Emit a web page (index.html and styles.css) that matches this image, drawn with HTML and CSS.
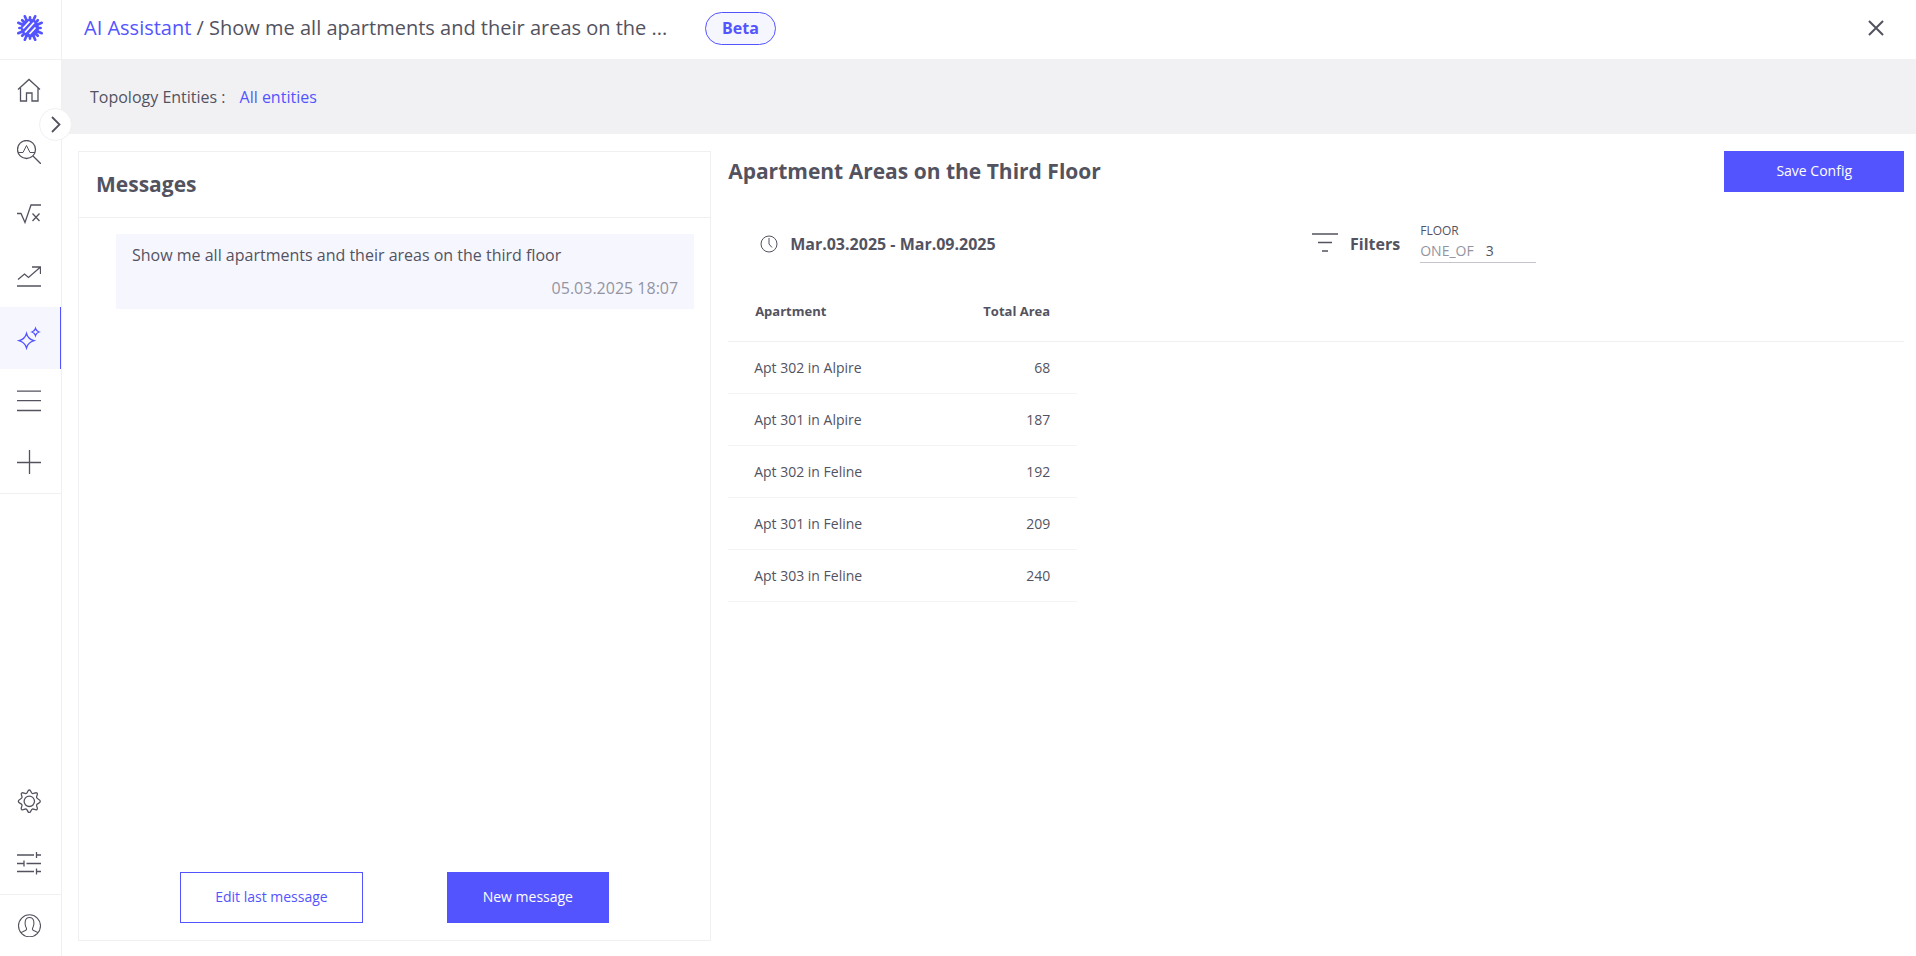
FILE: index.html
```html
<!DOCTYPE html>
<html lang="en">
<head>
<meta charset="utf-8">
<title>AI Assistant</title>
<link rel="stylesheet" href="styles.css">
</head>
<body>
<div class="app">
  <nav class="sidebar" aria-label="Main">
    <a class="logo" href="#" aria-label="Logo">
      <svg width="28" height="28" viewBox="0 0 28 28">
        <path d="M8.800 2.300L19.200 25.700M19.200 2.300L8.800 25.700M2.300 8.800L25.700 19.200M2.300 19.200L25.700 8.800M6.200 6.200L21.800 21.800M21.800 6.200L6.200 21.800M14 3.400V24.600M3.400 14H24.600" stroke="#5454ff" stroke-width="2.700" stroke-linecap="round"/>
        <circle cx="14" cy="14" r="9.200" fill="#5454ff"/>
        <path d="M7 14.500l6.500-7M9 18.500l9-10M13.500 20l6-6.500" stroke="#fff" stroke-width="1.800" fill="none"/>
      </svg>
    </a>
    <div class="nav-group">
      <a class="nav-item" href="#" aria-label="Home"><svg class="icon" viewBox="0 0 24 24"><path d="M1 11.500L12 1.500l11 10M3.500 10v13h6v-8h5.500v8h6V10"/></svg></a>
      <a class="nav-item" href="#" aria-label="Explore"><svg class="icon" viewBox="0 0 24 24"><circle cx="9.500" cy="9.500" r="9"/><path d="M16 16l8 8"/><path stroke-width="1" d="M1 12.500h5l3.500-7 3.500 7h5"/></svg></a>
      <a class="nav-item" href="#" aria-label="Formulas"><svg class="icon" viewBox="0 0 24 24"><path d="M0 11.500h4l4 9L14 3h10M15.500 11.500l7 7.500M22.500 11.500l-7 7.500"/></svg></a>
      <a class="nav-item" href="#" aria-label="Trends"><svg class="icon" viewBox="0 0 24 24"><path d="M1 15.500l6.500-5.500 4 3.500L23.500 3M15 3h8.500v7M0 22h24"/></svg></a>
      <a class="nav-item nav-item--active" href="#" aria-label="AI Assistant"><svg class="icon" viewBox="0 0 24 24"><path d="M9.500 7.500q1.500 5.500 7.500 7.200-6 1.800-7.500 7.300Q8 16.500 2 14.700 8 13 9.500 7.500zM18.500 2.500q.8 2.500 3.500 3.500-2.700 1-3.500 3.500Q17.700 7 15 6q2.700-1 3.500-3.500z"/></svg></a>
      <a class="nav-item" href="#" aria-label="Lists"><svg class="icon" viewBox="0 0 24 24"><path d="M0 3.200h24M0 12.700h24M0 22.500h24"/></svg></a>
      <a class="nav-item" href="#" aria-label="Add"><svg class="icon" viewBox="0 0 24 24"><path d="M12.500 0v24M0 12.500h24"/></svg></a>
    </div>
    <div class="nav-group nav-group--bottom">
      <a class="nav-item" href="#" aria-label="Settings"><svg class="icon" viewBox="0 0 24 24"><circle cx="12.300" cy="12.300" r="5.200"/><path d="M12.300 1c1.800 0 1.500 2.800 3 3.500s3.300-1.700 4.700-.4-1 3.200-.3 4.700 3.600 1.600 3.600 3.500-2.900 2-3.600 3.500 1.600 3.400.3 4.700-3.200-1-4.700-.4-1.200 3.500-3 3.500-1.500-2.800-3-3.500-3.300 1.700-4.700.4 1-3.200.3-4.700-3.600-1.600-3.600-3.500 2.900-2 3.600-3.500-1.600-3.400-.3-4.700 3.200 1 4.700.4 1.200-3.500 3-3.500z"/></svg></a>
      <a class="nav-item" href="#" aria-label="Controls"><svg class="icon" viewBox="0 0 24 24"><path d="M0 4h17M19.500 4H24M19.500 1v6M0 12.500h6.500M9.500 12.500H24M7 9.500v6M0 20.500h17M19.500 20.500H24M19.500 17.500v6"/></svg></a>
    </div>
    <div class="nav-group nav-group--user">
      <a class="nav-item" href="#" aria-label="Account"><svg class="icon icon--thin" viewBox="0 0 24 24"><circle cx="12.500" cy="12.800" r="11"/><path d="M4 20c1-1.500 5-2 5.500-3.500.3-1-.1-1.800-.8-3C8 12 8 9.500 8.300 8 8.800 5.500 10.500 4.500 12.500 4.500s3.700 1 4.200 3.500c.3 1.500.3 4-.4 5.500-.7 1.200-1.100 2-.8 3 .5 1.500 4.500 2 5.500 3.500"/></svg></a>
    </div>
    <button class="expand" type="button" aria-label="Expand menu"><svg width="10" height="18" viewBox="0 0 10 18"><path d="M1 1L8.500 8.500 1 16" fill="none" stroke="#53535f" stroke-width="1.800"/></svg></button>
  </nav>

  <div class="page">
    <header class="topbar">
      <h1 class="crumbs"><a class="link" href="#">AI Assistant</a> / Show me all apartments and their areas on the ...</h1>
      <span class="badge">Beta</span>
      <button class="close" type="button" aria-label="Close"><svg width="16" height="16" viewBox="0 0 16 16"><path d="M1 1l14 14M15 1L1 15" stroke="#53535f" stroke-width="2"/></svg></button>
    </header>
    <div class="scope"><span>Topology Entities :</span><a class="link" href="#">All entities</a></div>

    <main class="content">
      <section class="messages">
        <h2 class="messages-title">Messages</h2>
        <div class="messages-list">
          <article class="message">
            <p class="message-text">Show me all apartments and their areas on the third floor</p>
            <time class="message-time">05.03.2025 18:07</time>
          </article>
        </div>
        <div class="messages-actions">
          <button class="btn btn--outline" type="button">Edit last message</button>
          <button class="btn" type="button">New message</button>
        </div>
      </section>

      <section class="report">
        <div class="report-head">
          <h2 class="report-title">Apartment Areas on the Third Floor</h2>
          <button class="btn btn--save" type="button">Save Config</button>
        </div>
        <div class="report-tools">
          <div class="period">
            <svg width="18" height="18" viewBox="0 0 18 18" fill="none" stroke="#53535f"><circle cx="9" cy="9" r="8"/><path d="M9 3v6l3 3.500"/></svg>
            <span>Mar.03.2025 - Mar.09.2025</span>
          </div>
          <div class="filters">
            <svg width="26" height="20" viewBox="0 0 26 20" stroke="#53535f" stroke-width="1.500"><path d="M0 1h26M6 9.500h14M10 18h6"/></svg>
            <span class="filters-label">Filters</span>
            <div class="filter">
              <span class="filter-name">FLOOR</span>
              <span class="filter-value"><span class="filter-op">ONE_OF</span><span>3</span></span>
            </div>
          </div>
        </div>
        <table class="table">
          <thead><tr><th class="col-name">Apartment</th><th class="col-area">Total Area</th><th></th></tr></thead>
          <tbody>
            <tr><td>Apt 302 in Alpire</td><td class="col-area">68</td></tr>
            <tr><td>Apt 301 in Alpire</td><td class="col-area">187</td></tr>
            <tr><td>Apt 302 in Feline</td><td class="col-area">192</td></tr>
            <tr><td>Apt 301 in Feline</td><td class="col-area">209</td></tr>
            <tr><td>Apt 303 in Feline</td><td class="col-area">240</td></tr>
          </tbody>
        </table>
      </section>
    </main>
  </div>
</div>
</body>
</html>
```
FILE: styles.css
```css
* { box-sizing: border-box; }
body { margin: 0; background: #fff; color: #53535f; font: 16px/24px "Open Sans", sans-serif; }
h1, h2, p { margin: 0; }
button { font: inherit; color: inherit; padding: 0; border: 0; background: none; cursor: pointer; }
svg { display: block; flex: none; }

.link { color: #5454ff; text-decoration: none; }

.app { display: flex; min-height: 100vh; }

.sidebar { position: relative; display: flex; flex-direction: column; flex: none; width: 62px; border-right: 1px solid #f0f0f2; }
.logo { display: flex; align-items: center; height: 59px; padding: 0 0 3px 16px; }
.nav-group { border-top: 1px solid #f0f0f2; }
.nav-group:not(.nav-group--bottom) { border-bottom: 1px solid #f0f0f2; margin-bottom: -1px; }
.nav-group--bottom { margin-top: auto; border-top: 0; }
.nav-group--user { border-bottom: 0; }
.nav-item { display: flex; align-items: center; height: 62px; padding-left: 17px; color: #53535f; }
.nav-item:first-child { margin-top: -1px; }
.nav-item--active { background: #f6f6ff; color: #5454ff; border-right: 1px solid #5454ff; }
.icon { width: 24px; height: 24px; fill: none; stroke: currentColor; stroke-width: 1.3; }
.icon--thin { stroke-width: 1.1; }
.expand { position: absolute; left: 39px; top: 108px; width: 33px; height: 33px; padding-left: 11px; border: 1px solid #f0f0f2; border-radius: 50%; background: #fff; }

.page { display: flex; flex-direction: column; flex: 1; min-width: 0; }
.topbar { display: flex; align-items: center; height: 59px; padding: 0 32px 3px 22px; }
.crumbs { flex: 0 0 600px; font-size: 20px; line-height: 28px; font-weight: 400; white-space: nowrap; }
.badge { margin-left: 21px; padding: 3px 16px 4px; border: 1px solid #5454ff; border-radius: 17px; background: #f6f6ff; color: #5454ff; font-weight: 700; }
.close { margin-left: auto; }
.scope { display: flex; align-items: center; gap: 14px; height: 75px; padding: 0 28px; background: #f1f1f4; }

.content { display: grid; grid-template-columns: 35fr 65fr; flex: 1; gap: 17px; padding: 17px 12px 15px 16px; }
.messages { display: flex; flex-direction: column; min-width: 0; border: 1px solid #f0f0f2; }
.messages-title { padding: 18px 17px; border-bottom: 1px solid #f0f0f2; font-size: 21px; line-height: 29px; }
.messages-list { flex: 1; padding: 16px 16px 16px 37px; }
.message { padding: 9px 16px; background: #f6f6ff; }
.message-text { margin-bottom: 9px; }
.message-time { display: block; text-align: right; color: #94949f; }
.messages-actions { display: flex; justify-content: center; gap: 84px; padding-bottom: 17px; }

.btn { height: 51px; padding: 0 36px 2px; background: #5454ff; color: #fff; font-size: 14px; line-height: 20px; }
.btn--outline { padding: 0 34px 2px; border: 1px solid #5454ff; background: #fff; color: #5454ff; }
.btn--save { height: 41px; padding: 0 52px 2px; }

.report { min-width: 0; }
.report-head { display: flex; align-items: center; justify-content: space-between; }
.report-title { font-size: 21px; line-height: 29px; }
.report-tools { display: grid; grid-template-columns: 1fr 1fr; align-items: center; margin: 30px 8px 0 0; font-weight: 700; }
.period { display: flex; align-items: center; gap: 12px; padding: 2px 0 0 32px; }
.filters { display: flex; align-items: center; gap: 12px; }
.filters-label { padding-top: 2px; }
.filter { width: 116px; margin-left: 8px; border-bottom: 1px solid #c4c4cc; font-size: 14px; line-height: 22px; font-weight: 400; }
.filter-name { display: block; font-size: 12px; line-height: 18px; }
.filter-value { display: flex; gap: 12px; }
.filter-op { color: #94949f; }

.table { width: 100%; margin-top: 18px; border-collapse: collapse; font-size: 14px; line-height: 20px; }
.table th { height: 60px; padding: 0 27px; border-bottom: 1px solid #f0f0f2; font-size: 13px; text-align: left; }
.table td { height: 52px; padding: 2px 27px 0 26px; border-bottom: 1px solid #f4f4f6; }
.table .col-name { width: 200px; }
.table .col-area { width: 149px; text-align: right; }
```
